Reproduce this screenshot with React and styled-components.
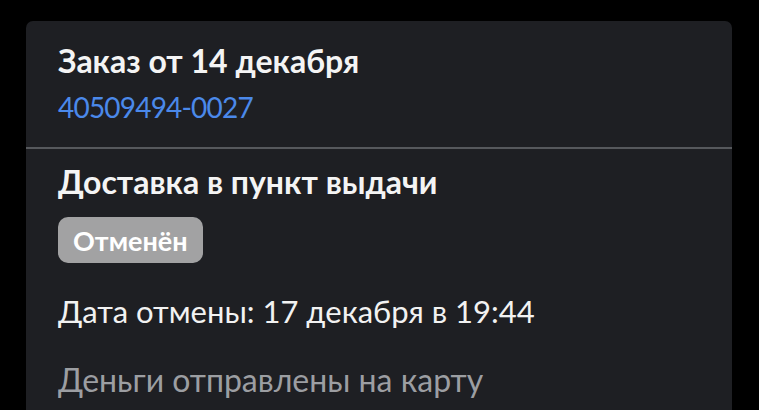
import React from "react";
import styled, { createGlobalStyle } from "styled-components";

const Global = createGlobalStyle`
  html, body { margin: 0; padding: 0; background: #000; }
  body { font-family: "Lato", "Noto Sans", sans-serif; -webkit-font-smoothing: antialiased; }
`;

const Page = styled.div`
  padding: 21px 27px 0 26px;
  height: 410px;
  box-sizing: border-box;
  overflow: hidden;
`;

const Card = styled.div`
  background: #1e1f23;
  border-radius: 7px;
  height: 420px;
  overflow: hidden;
`;

const Section = styled.div`
  padding: ${(p) => p.$pad};
  display: flex;
  flex-direction: column;
  align-items: flex-start;
`;

const Divider = styled.div`
  height: 2px;
  background: #56585c;
`;

const Title = styled.div`
  font-size: 32px;
  font-weight: 700;
  color: #f4f4f4;
  line-height: 38px;
  white-space: nowrap;
`;

const OrderNumber = styled.div`
  font-size: 28px;
  font-weight: 400;
  color: #4b89ea;
  line-height: 34px;
  margin-top: 10px;
  letter-spacing: -0.8px;
`;

const Badge = styled.div`
  margin-top: 16px;
  background: #a2a2a3;
  color: #fff;
  border-radius: 10px;
  height: 46px;
  padding: 0 15px;
  display: flex;
  align-items: center;
  font-size: 27px;
  font-weight: 700;
`;

const Line = styled.div`
  font-size: ${(p) => p.$size};
  font-weight: 400;
  line-height: ${(p) => p.$lh};
  color: ${(p) => p.$color};
  margin-top: ${(p) => p.$mt};
  white-space: nowrap;
`;

export default function App() {
  return (
    <>
      <Global />
      <Page>
        <Card>
          <Section $pad="21px 32px 23px">
            <Title>Заказ от 14 декабря</Title>
            <OrderNumber>40509494-0027</OrderNumber>
          </Section>
          <Divider />
          <Section $pad="14px 32px">
            <Title>Доставка в пункт выдачи</Title>
            <Badge>Отменён</Badge>
            <Line $size="31px" $lh="37px" $color="#f2f2f2" $mt="30px">
              Дата отмены: 17 декабря в 19:44
            </Line>
            <Line $size="32px" $lh="38px" $color="#9c9ea2" $mt="31px">
              Деньги отправлены на карту
            </Line>
          </Section>
        </Card>
      </Page>
    </>
  );
}
